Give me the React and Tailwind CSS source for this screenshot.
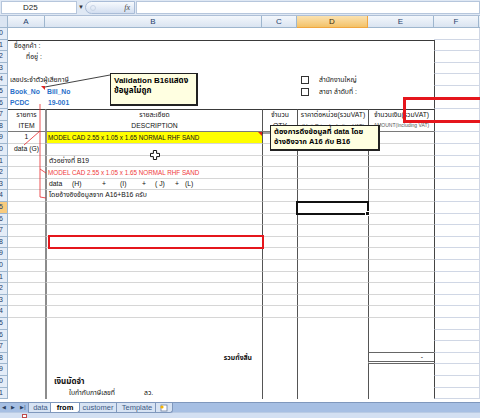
import React from "react";

const Y = [28, 40, 51, 63, 74, 86, 98, 109, 121, 132, 144, 156, 167, 179, 190, 202, 214, 225, 237, 248, 260, 272, 283, 295, 306, 318, 330, 341, 353, 364, 376, 388, 399, 411];

function Box({ label }) {
  return (
    <span className="flex items-center gap-[10px]">
      <span className="w-[8px] h-[8px] border border-[#333] bg-white" />
      <span>{label}</span>
    </span>
  );
}

const content = {
  1: { a: <span className="pl-[6px]">ชื่อลูกค้า :</span> },
  2: { a: <span className="pl-[18px]">ที่อยู่ :</span> },
  4: {
    a: <span className="pl-[2px]">เลขประจำตัวผู้เสียภาษี</span>,
    d: <span className="pl-[4px]"><Box label="สำนักงานใหญ่" /></span>,
  },
  5: {
    a: <span className="pl-[2px] font-bold text-[#2a6fc9]">Book_No</span>,
    b: <span className="pl-[2px] font-bold text-[#2a6fc9]">Bill_No</span>,
    d: <span className="pl-[4px]"><Box label="สาขา ลำดับที่ :" /></span>,
  },
  6: {
    a: <span className="pl-[2px] font-bold text-[#2a6fc9]">PCDC</span>,
    b: <span className="pl-[3px] font-bold text-[#2a6fc9]">19-001</span>,
  },
  7: {
    a: <span className="w-full text-center">รายการ</span>,
    b: <span className="w-full text-center">รายละเอียด</span>,
    c: <span className="w-full text-center">จำนวน</span>,
    d: <span className="w-full text-center">ราคาต่อหน่วย(รวมVAT)</span>,
    e: <span className="w-full text-center">จำนวนเงิน(รวมVAT)</span>,
  },
  8: {
    a: <span className="w-full text-center">ITEM</span>,
    b: <span className="w-full text-center">DESCRIPTION</span>,
    c: <span className="w-full text-center">QTY</span>,
    d: <span className="w-full text-center text-[5.5px] text-[#555]">(Unit Price Including VAT)</span>,
    e: <span className="w-full text-center text-[5px] text-[#555]">AMOUNT(Including VAT)</span>,
  },
  9: {
    a: <span className="w-full text-center">1</span>,
    b: <span className="pl-[1px] text-[6.3px]">MODEL CAD 2.55 x 1.05 x 1.65 NORMAL RHF SAND</span>,
  },
  10: { a: <span className="w-full text-center">data (G)</span> },
  11: { b: <span className="pl-[2px]">ตัวอย่างที่ B19</span> },
  12: { b: <span className="pl-[1px] text-[6.3px] text-[#f03a3a]">MODEL CAD 2.55 x 1.05 x 1.65 NORMAL RHF SAND</span> },
  13: {
    b: (
      <span className="flex pl-[2px]">
        <span className="w-[23px]">data</span>
        <span className="w-[30px]">(H)</span>
        <span className="w-[18px]">+</span>
        <span className="w-[22px]">(I)</span>
        <span className="w-[13px]">+</span>
        <span className="w-[20px]">( J)</span>
        <span className="w-[10px]">+</span>
        <span>(L)</span>
      </span>
    ),
  },
  14: { b: <span className="pl-[2px]">โดยอ้างอิงข้อมูลจาก A16+B16 ครับ</span> },
  28: {
    b: <span className="w-full text-right pr-[10px] font-bold">รวมทั้งสิ้น</span>,
    e: <span className="w-full text-right pr-[11px]">-</span>,
  },
  30: { b: <span className="pl-[7px] font-bold text-[8px]">เงินมัดจำ</span> },
  31: {
    b: (
      <span className="flex pl-[22px]">
        <span className="w-[75px]">ใบกำกับภาษีเลขที่</span>
        <span>ลว.</span>
      </span>
    ),
  },
};

function Row({ k }) {
  const h = Y[k + 1] - Y[k];
  const hc = h === 12 ? "h-[12px]" : "h-[11px]";
  const c = content[k] || {};
  const body = k >= 9 && k <= 24;
  const table = k >= 7;
  const top = k === 1 || k === 7 ? "border-t border-t-[#3a3a3a]" : "";
  const grid = body ? "border-b border-b-[#d6d6d6]" : k === 8 ? "border-b border-b-[#7a7a7a]" : "";
  const cell = "shrink-0 flex items-center whitespace-nowrap";
  const vl = table ? "border-l border-l-[#555]" : "";
  let eExtra = "";
  if (k === 27) eExtra = "border-b border-b-[#666]";
  if (k === 28) eExtra = "border-b-[3px] border-double border-b-[#666]";
  const sel = k === 15;
  return (
    <div className={`flex ${hc}`}>
      <div className={`w-[8px] shrink-0 overflow-hidden flex items-center justify-end border-r border-b border-[#9eb6ce] ${sel ? "bg-[#f8cb7e]" : "bg-[#e4ecf7]"}`}>
        <span className="pr-[4px] text-[7px] text-[#27416b]">{k + 10}</span>
      </div>
      <div className={`${cell} w-[37px] ${top} ${grid}`}>{c.a}</div>
      <div className={`${cell} w-[217px] ${top} ${grid} ${table ? "border-l-2 border-l-[#8c8c8c]" : ""} ${k === 9 ? "bg-[#ffff00]" : ""}`}>{c.b}</div>
      <div className={`${cell} w-[35px] ${top} ${grid} ${vl}`}>{c.c}</div>
      <div className={`${cell} w-[71px] ${top} ${grid} ${vl}`}>{c.d}</div>
      <div className={`${cell} w-[66px] ${top} ${grid} ${vl} ${eExtra}`}>{c.e}</div>
      <div className={`${cell} w-[45px] border-b border-b-[#d0d7e5] ${k >= 1 ? "border-l border-l-[#444]" : ""}`} />
      <div className="flex-1 border-l border-b border-[#d0d7e5]" />
    </div>
  );
}

function Tab({ label, active, w }) {
  return (
    <div
      className={`${w} h-[10px] -mr-[3px] flex items-center justify-center border border-t-0 border-[#7f98bd] rounded-br-[3px] text-[7.5px] leading-none ${
        active ? "bg-white text-black font-bold z-10" : "bg-[#d7e3f3] text-[#3d5a85]"
      }`}
    >
      {label}
    </div>
  );
}

export default function App() {
  const rows = [];
  for (let k = 0; k < 32; k++) rows.push(<Row key={k} k={k} />);

  return (
    <div className="relative w-[480px] h-[418px] overflow-hidden bg-white text-[6.8px] text-[#111] font-['Liberation_Sans','Noto_Sans_Thai','Noto_Sans',sans-serif]">
      {/* formula bar */}
      <div className="h-[16px] flex items-center bg-[#dfe8f4] border-b border-[#aebfd6]">
        <div className="w-[76px] h-[13px] ml-[1px] bg-white border border-[#b6c6dc] flex items-center pl-[21px] text-[8px] text-[#222]">D25</div>
        <div className="w-[8px] text-[6px] text-[#333] text-center">▼</div>
        <div className="w-[50px] h-[13px] rounded-l-full bg-gradient-to-b from-[#f7fafd] to-[#d3def0] border border-[#a9bcd7] flex items-center justify-between px-[4px]">
          <span className="w-[6px] h-[6px] rounded-full border border-[#c9d5e6]" />
          <span className="italic font-['Liberation_Serif',serif] text-[8px] text-[#444]">fx</span>
        </div>
        <div className="flex-1 h-[13px] bg-white border border-[#b6c6dc] ml-[1px]" />
      </div>

      {/* column headers */}
      <div className="h-[12px] flex text-[8px] text-[#27416b]">
        <div className="w-[8px] bg-[#dbe5f2] border-r border-b border-[#9eb6ce]" />
        <div className="w-[37px] flex items-center justify-center bg-gradient-to-b from-[#f3f7fc] to-[#dae4f1] border-r border-b border-[#9eb6ce]">A</div>
        <div className="w-[217px] flex items-center justify-center bg-gradient-to-b from-[#f3f7fc] to-[#dae4f1] border-r border-b border-[#9eb6ce]">B</div>
        <div className="w-[35px] flex items-center justify-center bg-gradient-to-b from-[#f3f7fc] to-[#dae4f1] border-r border-b border-[#9eb6ce]">C</div>
        <div className="w-[71px] flex items-center justify-center bg-gradient-to-b from-[#fbe2b0] to-[#f3c267] border-r border-b border-[#f0a640] text-[#3b2a0c]">D</div>
        <div className="w-[66px] flex items-center justify-center bg-gradient-to-b from-[#f3f7fc] to-[#dae4f1] border-r border-b border-[#9eb6ce]">E</div>
        <div className="w-[45px] flex items-center justify-center bg-gradient-to-b from-[#f3f7fc] to-[#dae4f1] border-r border-b border-[#9eb6ce]">F</div>
        <div className="flex-1 bg-gradient-to-b from-[#f3f7fc] to-[#dae4f1] border-b border-[#9eb6ce]" />
      </div>

      {/* sheet */}
      <div className="h-[374px] overflow-hidden">{rows}</div>

      {/* sheet tabs */}
      <div className="h-[10px] flex bg-[#a6bfe3] border-t border-[#7f98bd]">
        <div className="w-[28px] flex items-center justify-around text-[5px] text-[#2b3f5e]">
          <span>◀</span>
          <span>▶</span>
          <span>▶|</span>
        </div>
        <Tab label="data" w="w-[25px]" />
        <Tab label="from" w="w-[30px]" active />
        <Tab label="customer" w="w-[42px]" />
        <Tab label="Template" w="w-[42px]" />
        <div className="w-[18px] h-[10px] flex items-center justify-center border border-t-0 border-[#7f98bd] rounded-br-[3px] bg-[#d7e3f3]">
          <svg width="10" height="8" viewBox="0 0 10 8">
            <rect x="2" y="1" width="6" height="6" fill="#fff" stroke="#6b7fa0" strokeWidth="0.8" />
            <circle cx="3" cy="3" r="1.6" fill="#f5b400" />
          </svg>
        </div>
      </div>
      <div className="h-[6px] bg-[#d3e0f2] border-t border-[#b9cbe4] flex items-center">
        <span className="ml-[22px] w-[5px] h-[4px] border border-[#c04a4a] bg-white" />
      </div>

      {/* overlays: comments, drawn shapes, selection */}
      <svg className="absolute left-0 top-0 pointer-events-none" width="480" height="418">
        <polygon points="41,86 45,86 45,90" fill="#e0221e" />
        <line x1="45" y1="87" x2="110" y2="75" stroke="#111" strokeWidth="0.8" />
        <polygon points="258,132 262,132 262,136" fill="#e0221e" />
        <line x1="262" y1="133" x2="271" y2="133" stroke="#111" strokeWidth="0.8" />
        <g stroke="#e8262a" strokeWidth="0.8" fill="none">
          <line x1="40" y1="104" x2="40" y2="197" />
          <line x1="40" y1="131" x2="24" y2="145" />
          <line x1="40" y1="169" x2="46" y2="173" />
          <line x1="40" y1="197" x2="46" y2="198" />
        </g>
        <g transform="translate(155 155)">
          <path d="M-1.6 -4.5 H1.6 V-1.6 H4.5 V1.6 H1.6 V4.5 H-1.6 V1.6 H-4.5 V-1.6 H-1.6 Z" fill="#fff" stroke="#111" strokeWidth="1" />
        </g>
      </svg>

      <div className="absolute left-[110px] top-[73px] w-[88px] h-[33px] bg-[#ffffe1] border border-[#222] border-b-2 border-r-2 px-[3px] pt-[2px] text-[8px] font-bold leading-[10px] text-black">
        <div>Validation B16แสดง</div>
        <div>ข้อมูลไม่ถูก</div>
      </div>

      <div className="absolute left-[270px] top-[125px] w-[110px] h-[26px] bg-[#ffffe1] border border-[#222] border-b-2 border-r-2 px-[3px] pt-[1px] text-[7.5px] font-bold leading-[10px] text-black">
        <div>ต้องการดึงข้อมูลที่ data โดย</div>
        <div>อ้างอิงจาก A16 กับ B16</div>
      </div>

      <div className="absolute left-[48px] top-[235px] w-[216px] h-[14px] border-2 border-[#e5161c]" />
      <div className="absolute left-[403px] top-[97px] w-[82px] h-[26px] border-[3px] border-[#e5161c]" />

      <div className="absolute left-[296px] top-[201px] w-[73px] h-[14px] border-2 border-[#111]">
        <span className="absolute -right-[3px] -bottom-[3px] w-[5px] h-[5px] bg-[#111] border border-white" />
      </div>
    </div>
  );
}
